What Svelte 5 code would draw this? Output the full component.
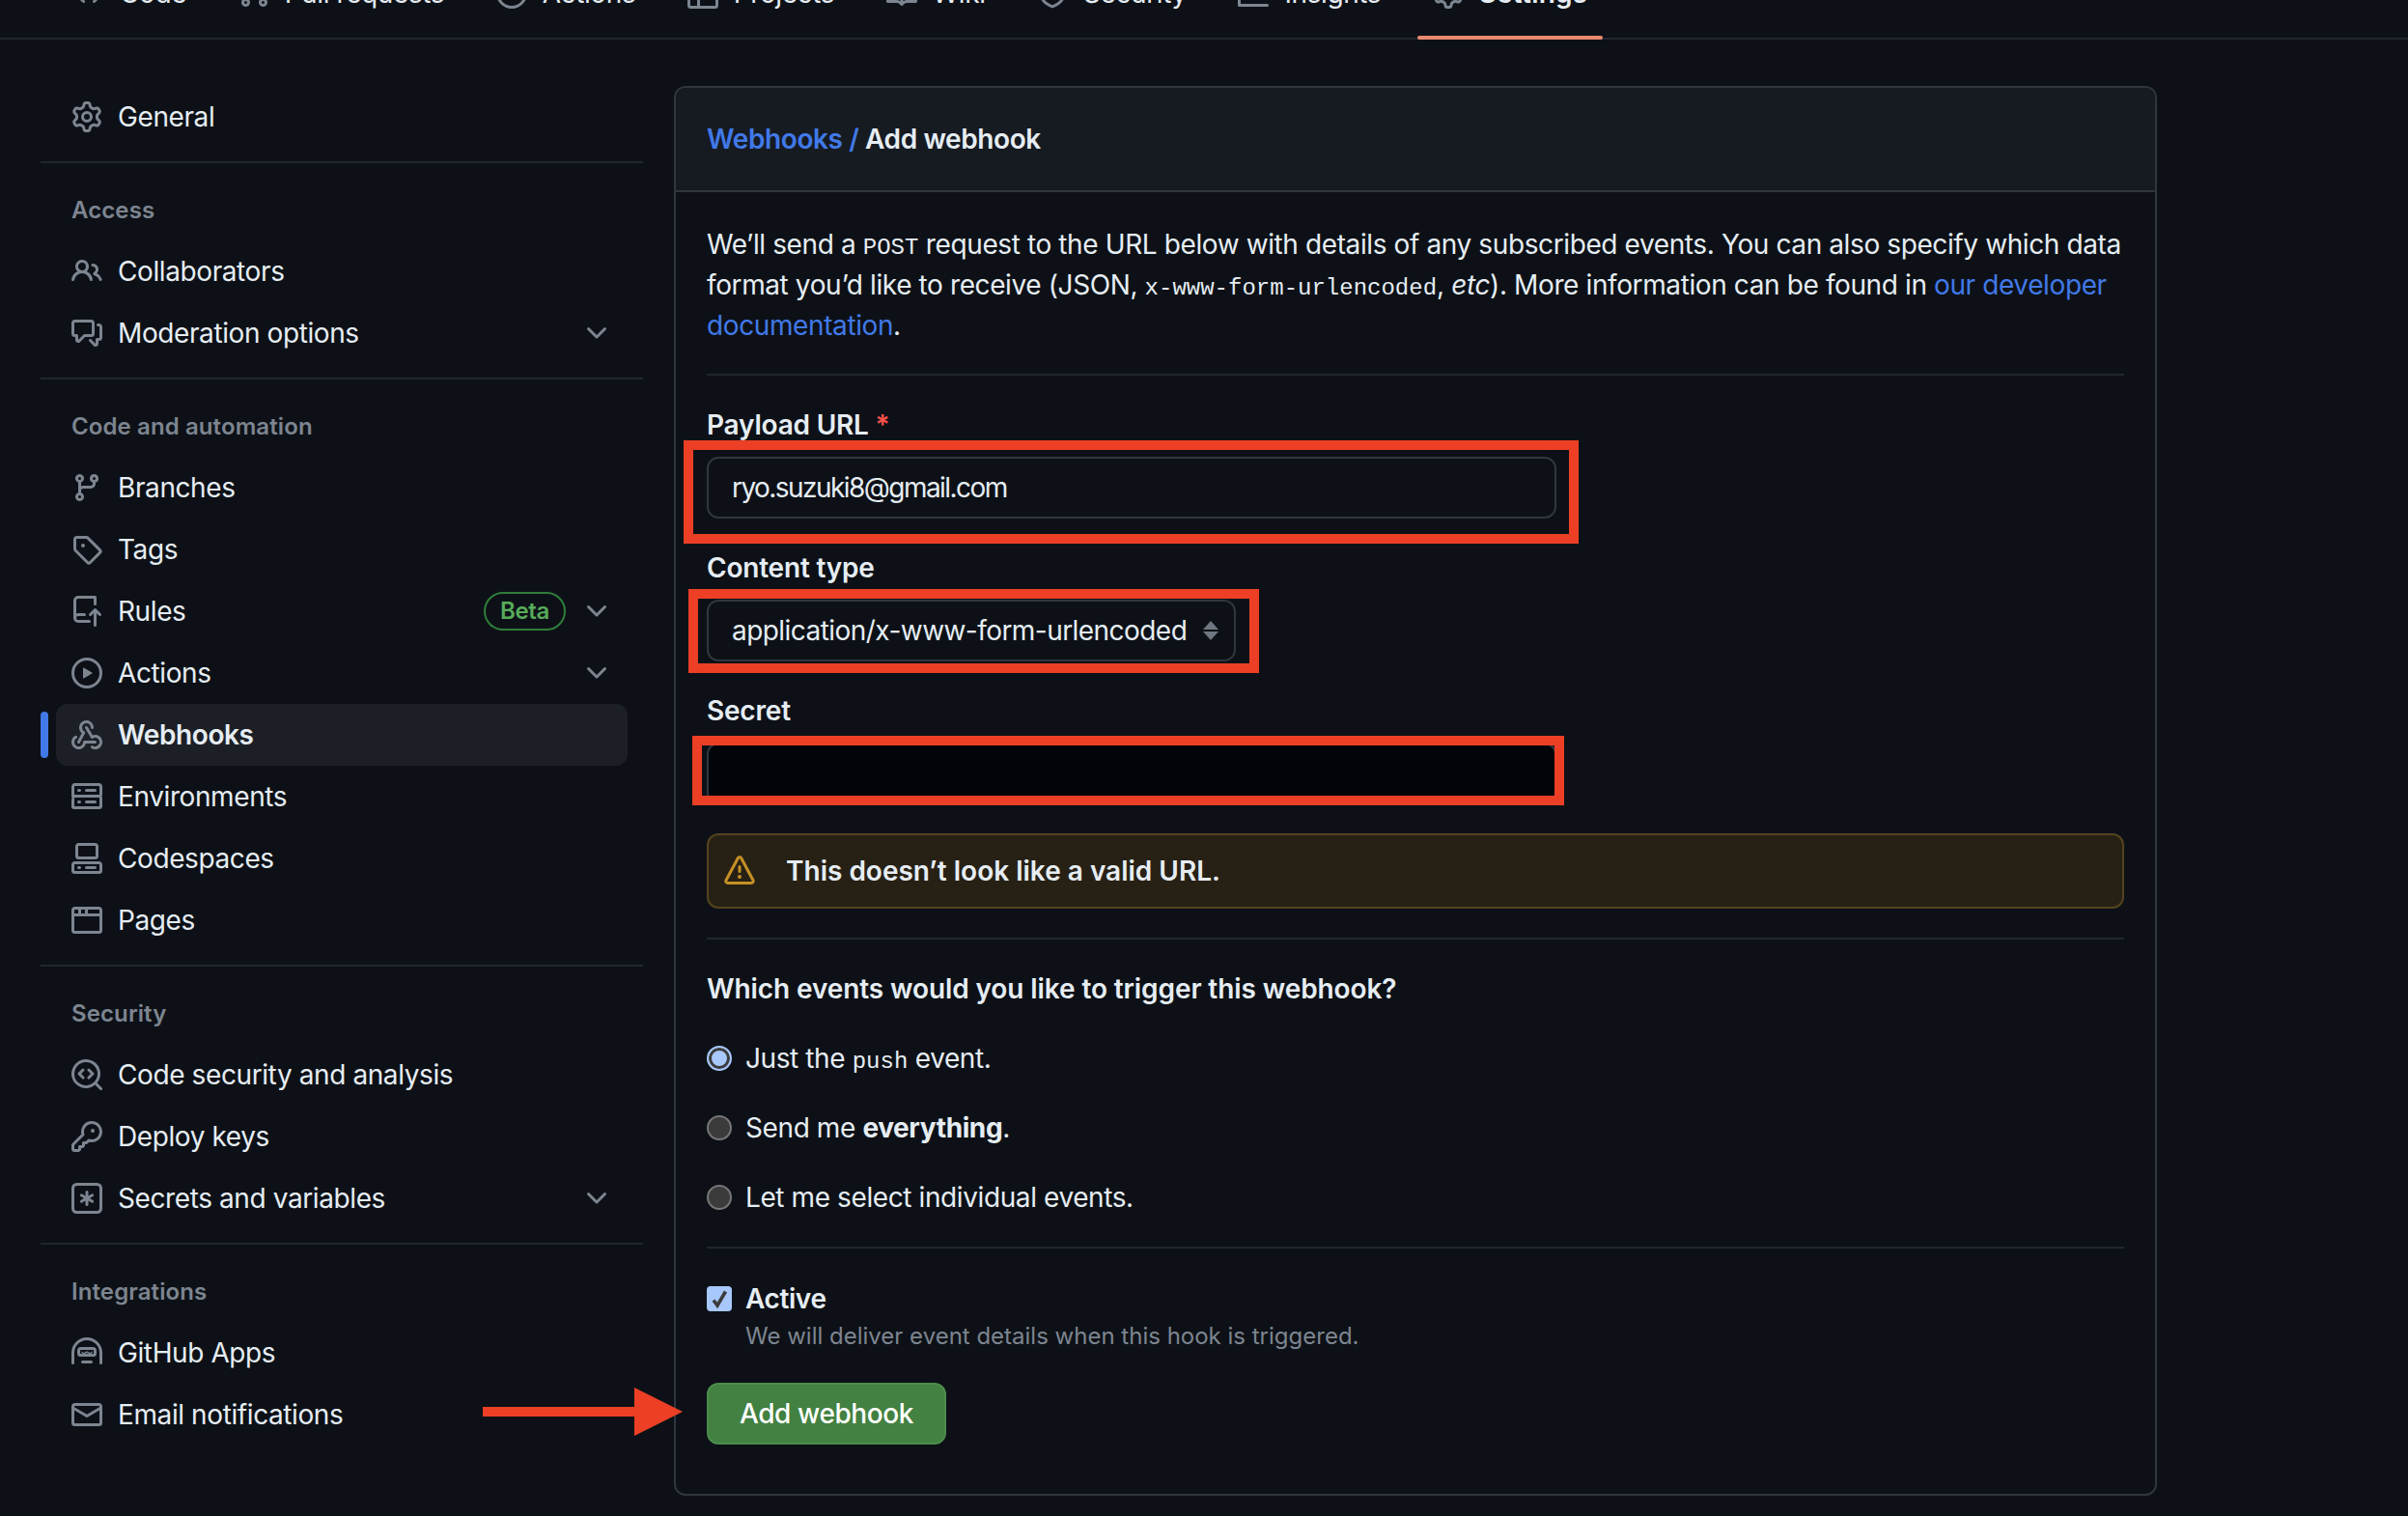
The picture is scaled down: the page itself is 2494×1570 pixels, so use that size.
<script>
	const icons = {
		code: 'm11.28 3.22 4.25 4.25a.75.75 0 0 1 0 1.06l-4.25 4.25a.749.749 0 0 1-1.275-.326.749.749 0 0 1 .215-.734L13.94 8l-3.72-3.72a.749.749 0 0 1 .326-1.275.749.749 0 0 1 .734.215Zm-6.56 0a.751.751 0 0 1 1.042.018.751.751 0 0 1 .018 1.042L2.06 8l3.72 3.72a.749.749 0 0 1-.326 1.275.749.749 0 0 1-.734-.215L.47 8.53a.75.75 0 0 1 0-1.06Z',
		pull: 'M1.5 3.25a2.25 2.25 0 1 1 3 2.122v5.256a2.251 2.251 0 1 1-1.5 0V5.372A2.25 2.25 0 0 1 1.5 3.25Zm5.677-.177L9.573.677A.25.25 0 0 1 10 .854V2.5h1A2.5 2.5 0 0 1 13.5 5v5.628a2.251 2.251 0 1 1-1.5 0V5a1 1 0 0 0-1-1h-1v1.646a.25.25 0 0 1-.427.177L7.177 3.427a.25.25 0 0 1 0-.354ZM3.75 2.5a.75.75 0 1 0 0 1.5.75.75 0 0 0 0-1.5Zm0 9.5a.75.75 0 1 0 0 1.5.75.75 0 0 0 0-1.5Zm8.25.75a.75.75 0 1 0 1.5 0 .75.75 0 0 0-1.5 0Z',
		play: 'M8 0a8 8 0 1 1 0 16A8 8 0 0 1 8 0ZM1.5 8a6.5 6.5 0 1 0 13 0 6.5 6.5 0 0 0-13 0Zm4.879-2.773 4.264 2.559a.25.25 0 0 1 0 .428l-4.264 2.559A.25.25 0 0 1 6 10.559V5.442a.25.25 0 0 1 .379-.215Z',
		table: 'M0 1.75C0 .784.784 0 1.75 0h12.5C15.216 0 16 .784 16 1.75v12.5A1.75 1.75 0 0 1 14.25 16H1.75A1.75 1.75 0 0 1 0 14.25ZM6.5 6.5v8h7.75a.25.25 0 0 0 .25-.25V6.5Zm8-1.5V1.75a.25.25 0 0 0-.25-.25H6.5V5Zm-13 1.5v7.75c0 .138.112.25.25.25H5v-8ZM5 5V1.5H1.75a.25.25 0 0 0-.25.25V5Z',
		book: 'M0 1.75A.75.75 0 0 1 .75 1h4.253c1.227 0 2.317.59 3 1.501A3.743 3.743 0 0 1 11.006 1h4.245a.75.75 0 0 1 .75.75v10.5a.75.75 0 0 1-.75.75h-4.507a2.25 2.25 0 0 0-1.591.659l-.622.621a.75.75 0 0 1-1.06 0l-.622-.621A2.25 2.25 0 0 0 5.258 13H.75a.75.75 0 0 1-.75-.75Zm7.251 10.324.004-5.073-.002-2.253A2.25 2.25 0 0 0 5.003 2.5H1.5v9h3.757a3.75 3.75 0 0 1 1.994.574ZM8.755 4.75l-.004 7.322a3.752 3.752 0 0 1 1.992-.572H14.5v-9h-3.495a2.25 2.25 0 0 0-2.25 2.25Z',
		shield: 'M7.467.133a1.748 1.748 0 0 1 1.066 0l5.25 1.68A1.75 1.75 0 0 1 15 3.48V7c0 1.566-.32 3.182-1.303 4.682-.983 1.498-2.585 2.813-5.032 3.855a1.697 1.697 0 0 1-1.33 0c-2.447-1.042-4.049-2.357-5.032-3.855C1.32 10.182 1 8.566 1 7V3.48a1.75 1.75 0 0 1 1.217-1.667Zm.61 1.429a.25.25 0 0 0-.153 0l-5.25 1.68a.25.25 0 0 0-.174.238V7c0 1.358.275 2.666 1.057 3.86.784 1.194 2.121 2.34 4.366 3.297a.196.196 0 0 0 .154 0c2.245-.956 3.582-2.104 4.366-3.298C13.225 9.666 13.5 8.36 13.5 7V3.48a.251.251 0 0 0-.174-.237l-5.25-1.68ZM8.75 4.75v3a.75.75 0 0 1-1.5 0v-3a.75.75 0 0 1 1.5 0ZM9 10.5a1 1 0 1 1-2 0 1 1 0 0 1 2 0Z',
		graph: 'M1.5 1.75V13.5h13.75a.75.75 0 0 1 0 1.5H.75a.75.75 0 0 1-.75-.75V1.75a.75.75 0 0 1 1.5 0Zm14.28 2.53-5.25 5.25a.75.75 0 0 1-1.06 0L7 7.06 4.28 9.78a.751.751 0 0 1-1.042-.018.751.751 0 0 1-.018-1.042l3.25-3.25a.75.75 0 0 1 1.06 0L8.5 7.44l4.72-4.72a.751.751 0 0 1 1.042.018.751.751 0 0 1 .018 1.042Z',
		gear: 'M8 0a8.2 8.2 0 0 1 .701.031C9.444.095 9.99.645 10.16 1.29l.288 1.107c.018.066.079.158.212.224.231.114.454.243.668.386.123.082.233.09.299.071l1.103-.303c.644-.176 1.392.021 1.82.63.27.385.506.792.704 1.218.315.675.111 1.422-.364 1.891l-.814.806c-.049.048-.098.147-.088.294.016.257.016.515 0 .772-.01.147.038.246.088.294l.814.806c.475.469.679 1.216.364 1.891a7.977 7.977 0 0 1-.704 1.217c-.428.61-1.176.807-1.82.63l-1.102-.302c-.067-.019-.177-.011-.3.071a5.909 5.909 0 0 1-.668.386c-.133.066-.194.158-.211.224l-.29 1.106c-.168.646-.715 1.196-1.458 1.26a8.006 8.006 0 0 1-1.402 0c-.743-.064-1.289-.614-1.458-1.26l-.289-1.106c-.018-.066-.079-.158-.212-.224a5.738 5.738 0 0 1-.668-.386c-.123-.082-.233-.09-.299-.071l-1.103.303c-.644.176-1.392-.021-1.82-.63a8.12 8.12 0 0 1-.704-1.218c-.315-.675-.111-1.422.363-1.891l.815-.806c.05-.048.098-.147.088-.294a6.214 6.214 0 0 1 0-.772c.01-.147-.038-.246-.088-.294l-.815-.806C.635 6.045.431 5.298.746 4.623a7.92 7.92 0 0 1 .704-1.217c.428-.61 1.176-.807 1.82-.63l1.102.302c.067.019.177.011.3-.071.214-.143.437-.272.668-.386.133-.066.194-.158.211-.224l.29-1.106C6.009.645 6.556.095 7.299.03 7.53.01 7.764 0 8 0Zm-.571 1.525c-.036.003-.108.036-.137.146l-.289 1.105c-.147.561-.549.967-.998 1.189-.173.086-.34.183-.5.29-.417.278-.97.423-1.529.27l-1.103-.303c-.109-.03-.175.016-.195.045-.22.312-.412.644-.573.99-.014.031-.021.11.059.19l.815.806c.411.406.562.957.53 1.456a4.709 4.709 0 0 0 0 .582c.032.499-.119 1.05-.53 1.456l-.815.806c-.081.08-.073.159-.059.19.162.346.353.677.573.989.02.03.085.076.195.046l1.102-.303c.56-.153 1.113-.008 1.53.27.161.107.328.204.501.29.447.222.85.629.997 1.189l.289 1.105c.029.109.101.143.137.146a6.6 6.6 0 0 0 1.142 0c.036-.003.108-.036.137-.146l.289-1.105c.147-.561.549-.967.998-1.189.173-.086.34-.183.5-.29.417-.278.97-.423 1.529-.27l1.103.303c.109.029.175-.016.195-.045.22-.313.411-.644.573-.99.014-.031.021-.11-.059-.19l-.815-.806c-.411-.406-.562-.957-.53-1.456a4.709 4.709 0 0 0 0-.582c-.032-.499.119-1.05.53-1.456l.815-.806c.081-.08.073-.159.059-.19a6.464 6.464 0 0 0-.573-.989c-.02-.03-.085-.076-.195-.046l-1.102.303c-.56.153-1.113.008-1.53-.27a4.44 4.44 0 0 0-.501-.29c-.447-.222-.85-.629-.997-1.189l-.289-1.105c-.029-.11-.101-.143-.137-.146a6.6 6.6 0 0 0-1.142 0ZM11 8a3 3 0 1 1-6 0 3 3 0 0 1 6 0ZM9.5 8a1.5 1.5 0 1 0-3.001.001A1.5 1.5 0 0 0 9.5 8Z',
		people: 'M2 5.5a3.5 3.5 0 1 1 5.898 2.549 5.508 5.508 0 0 1 3.034 4.084.75.75 0 1 1-1.482.235 4 4 0 0 0-7.9 0 .75.75 0 0 1-1.482-.236A5.507 5.507 0 0 1 3.102 8.05 3.493 3.493 0 0 1 2 5.5ZM11 4a3.001 3.001 0 0 1 2.22 5.018 5.01 5.01 0 0 1 2.56 3.012.749.749 0 0 1-.885.954.752.752 0 0 1-.549-.514 3.507 3.507 0 0 0-2.522-2.372.75.75 0 0 1-.574-.73v-.352a.75.75 0 0 1 .416-.672A1.5 1.5 0 0 0 11 5.5.75.75 0 0 1 11 4Zm-5.5-.5a2 2 0 1 0-.001 3.999A2 2 0 0 0 5.5 3.5Z',
		discussion: 'M1.75 1h8.5c.966 0 1.75.784 1.75 1.75v5.5A1.75 1.75 0 0 1 10.25 10H7.061l-2.574 2.573A1.458 1.458 0 0 1 2 11.543V10h-.25A1.75 1.75 0 0 1 0 8.25v-5.5C0 1.784.784 1 1.75 1ZM1.5 2.75v5.5c0 .138.112.25.25.25h1a.75.75 0 0 1 .75.75v2.19l2.72-2.72a.749.749 0 0 1 .53-.22h3.5a.25.25 0 0 0 .25-.25v-5.5a.25.25 0 0 0-.25-.25h-8.5a.25.25 0 0 0-.25.25Zm13 2a.25.25 0 0 0-.25-.25h-.5a.75.75 0 0 1 0-1.5h.5c.966 0 1.75.784 1.75 1.75v5.5A1.75 1.75 0 0 1 14.25 12H14v1.543a1.458 1.458 0 0 1-2.487 1.03L9.22 12.28a.749.749 0 0 1 .326-1.275.749.749 0 0 1 .734.215l2.22 2.22v-2.19a.75.75 0 0 1 .75-.75h1a.25.25 0 0 0 .25-.25Z',
		branch: 'M9.5 3.25a2.25 2.25 0 1 1 3 2.122V6A2.5 2.5 0 0 1 10 8.5H6a1 1 0 0 0-1 1v1.128a2.251 2.251 0 1 1-1.5 0V5.372a2.25 2.25 0 1 1 1.5 0v1.836A2.493 2.493 0 0 1 6 7h4a1 1 0 0 0 1-1v-.628A2.25 2.25 0 0 1 9.5 3.25Zm-6 0a.75.75 0 1 0 1.5 0 .75.75 0 0 0-1.5 0Zm8.25-.75a.75.75 0 1 0 0 1.5.75.75 0 0 0 0-1.5ZM4.25 12a.75.75 0 1 0 0 1.5.75.75 0 0 0 0-1.5Z',
		tag: 'M1 7.775V2.75C1 1.784 1.784 1 2.75 1h5.025c.464 0 .91.184 1.238.513l6.25 6.25a1.75 1.75 0 0 1 0 2.474l-5.026 5.026a1.75 1.75 0 0 1-2.474 0l-6.25-6.25A1.752 1.752 0 0 1 1 7.775Zm1.5 0c0 .066.026.13.073.177l6.25 6.25a.25.25 0 0 0 .354 0l5.025-5.025a.25.25 0 0 0 0-.354l-6.25-6.25a.25.25 0 0 0-.177-.073H2.75a.25.25 0 0 0-.25.25ZM6 5a1 1 0 1 1 0 2 1 1 0 0 1 0-2Z',
		repoPush: 'M1 2.5A2.5 2.5 0 0 1 3.5 0h8.75a.75.75 0 0 1 .75.75v3.5a.75.75 0 0 1-1.5 0V1.5h-8a1 1 0 0 0-1 1v6.708A2.493 2.493 0 0 1 3.5 9h3.25a.75.75 0 0 1 0 1.5H3.5a1 1 0 0 0 0 2h5.75a.75.75 0 0 1 0 1.5H3.5A2.5 2.5 0 0 1 1 11.5Zm13.23 7.79h-.001l-1.224-1.224v6.184a.75.75 0 0 1-1.5 0V9.066L10.28 10.29a.75.75 0 0 1-1.06-1.061l2.505-2.504a.75.75 0 0 1 1.06 0L15.29 9.23a.751.751 0 0 1-.018 1.042.751.751 0 0 1-1.042.018Z',
		webhook: 'M5.5 4.25a2.25 2.25 0 0 1 4.5 0 .75.75 0 0 0 1.5 0 3.75 3.75 0 1 0-6.14 2.889l-2.272 4.258a.75.75 0 0 0 1.324.706L7 7.25a.75.75 0 0 0-.309-1.015A2.25 2.25 0 0 1 5.5 4.25ZM7.364 3.607a.75.75 0 0 1 1.03.257l2.608 4.349a3.75 3.75 0 1 1-.628 6.785.75.75 0 0 1 .752-1.299 2.25 2.25 0 1 0-.033-3.88.75.75 0 0 1-1.03-.256L7.107 4.636a.75.75 0 0 1 .257-1.03ZM2.9 8.776A.75.75 0 0 1 2.625 9.8 2.25 2.25 0 1 0 6 11.75a.75.75 0 0 1 .75-.751h5.5a.75.75 0 0 1 0 1.5H7.425a3.751 3.751 0 1 1-5.55-3.998.75.75 0 0 1 1.024.274Z',
		server: 'M1.75 1h12.5c.966 0 1.75.784 1.75 1.75v4c0 .372-.116.717-.314 1 .198.283.314.628.314 1v4a1.75 1.75 0 0 1-1.75 1.75H1.75A1.75 1.75 0 0 1 0 13.75v-4c0-.372.116-.717.314-1A1.739 1.739 0 0 1 0 7.75v-4C0 1.784.784 1 1.75 1ZM1.5 2.75v4c0 .138.112.25.25.25h12.5a.25.25 0 0 0 .25-.25v-4a.25.25 0 0 0-.25-.25H1.75a.25.25 0 0 0-.25.25Zm.25 5.75a.25.25 0 0 0-.25.25v4c0 .138.112.25.25.25h12.5a.25.25 0 0 0 .25-.25v-4a.25.25 0 0 0-.25-.25ZM7 4.75A.75.75 0 0 1 7.75 4h4.5a.75.75 0 0 1 0 1.5h-4.5A.75.75 0 0 1 7 4.75ZM7.75 10h4.5a.75.75 0 0 1 0 1.5h-4.5a.75.75 0 0 1 0-1.5ZM3 4.75A.75.75 0 0 1 3.75 4h.5a.75.75 0 0 1 0 1.5h-.5A.75.75 0 0 1 3 4.75ZM3.75 10h.5a.75.75 0 0 1 0 1.5h-.5a.75.75 0 0 1 0-1.5Z',
		codespaces: 'M0 11.25c0-.966.784-1.75 1.75-1.75h12.5c.966 0 1.75.784 1.75 1.75v3A1.75 1.75 0 0 1 14.25 16H1.75A1.75 1.75 0 0 1 0 14.25Zm2-9.5C2 .784 2.784 0 3.75 0h8.5C13.216 0 14 .784 14 1.75v5a1.75 1.75 0 0 1-1.75 1.75h-8.5A1.75 1.75 0 0 1 2 6.75Zm1.75-.25a.25.25 0 0 0-.25.25v5c0 .138.112.25.25.25h8.5a.25.25 0 0 0 .25-.25v-5a.25.25 0 0 0-.25-.25Zm-2 9.5a.25.25 0 0 0-.25.25v3c0 .138.112.25.25.25h12.5a.25.25 0 0 0 .25-.25v-3a.25.25 0 0 0-.25-.25ZM7 12.75a.75.75 0 0 1 .75-.75h4.5a.75.75 0 0 1 0 1.5h-4.5a.75.75 0 0 1-.75-.75Zm-4 0a.75.75 0 0 1 .75-.75h.5a.75.75 0 0 1 0 1.5h-.5a.75.75 0 0 1-.75-.75Z',
		browser: 'M0 2.75C0 1.784.784 1 1.75 1h12.5c.966 0 1.75.784 1.75 1.75v10.5A1.75 1.75 0 0 1 14.25 15H1.75A1.75 1.75 0 0 1 0 13.25ZM14.5 6h-13v7.25c0 .138.112.25.25.25h12.5a.25.25 0 0 0 .25-.25Zm-6-3.5v2h6V2.75a.25.25 0 0 0-.25-.25ZM5 2.5v2h2v-2Zm-3.25 0a.25.25 0 0 0-.25.25V4.5h2v-2Z',
		codescan: 'M8.47 4.97a.75.75 0 0 0 0 1.06L9.94 7.5 8.47 8.97a.75.75 0 1 0 1.06 1.06l2-2a.75.75 0 0 0 0-1.06l-2-2a.75.75 0 0 0-1.06 0ZM6.53 6.03a.75.75 0 0 0-1.06-1.06l-2 2a.75.75 0 0 0 0 1.06l2 2a.75.75 0 1 0 1.06-1.06L5.06 7.5l1.47-1.47ZM12.246 13.307a7.501 7.501 0 1 1 1.06-1.06l2.474 2.473a.749.749 0 0 1-.326 1.275.749.749 0 0 1-.734-.215ZM1.5 7.5a6.002 6.002 0 0 0 3.608 5.504 6.002 6.002 0 0 0 6.486-1.117.748.748 0 0 1 .292-.293A6 6 0 1 0 1.5 7.5Z',
		key: 'M10.5 0a5.499 5.499 0 1 1-1.288 10.848l-.932.932a.749.749 0 0 1-.53.22H7v.75a.749.749 0 0 1-.22.53l-.5.5a.749.749 0 0 1-.53.22H5v.75a.749.749 0 0 1-.22.53l-.5.5a.749.749 0 0 1-.53.22h-2A1.75 1.75 0 0 1 0 14.25v-2c0-.199.079-.389.22-.53l4.932-4.932A5.5 5.5 0 0 1 10.5 0Zm-4 5.5c-.001.431.069.86.205 1.269a.75.75 0 0 1-.181.768L1.5 12.56v1.69c0 .138.112.25.25.25h1.69l.06-.06v-1.19a.75.75 0 0 1 .75-.75h1.19l.06-.06v-1.19a.75.75 0 0 1 .75-.75h1.19l1.023-1.025a.75.75 0 0 1 .768-.18A4 4 0 1 0 6.5 5.5ZM11 6a1 1 0 1 1 0-2 1 1 0 0 1 0 2Z',
		asterisk: 'M0 2.75A2.75 2.75 0 0 1 2.75 0h10.5A2.75 2.75 0 0 1 16 2.75v10.5A2.75 2.75 0 0 1 13.25 16H2.75A2.75 2.75 0 0 1 0 13.25ZM2.75 1.5c-.69 0-1.25.56-1.25 1.25v10.5c0 .69.56 1.25 1.25 1.25h10.5c.69 0 1.25-.56 1.25-1.25V2.75c0-.69-.56-1.25-1.25-1.25ZM8 4a.75.75 0 0 1 .75.75V6.7l1.69-.975a.75.75 0 0 1 .75 1.3L9.5 8l1.69.976a.75.75 0 0 1-.75 1.298L8.75 9.3v1.951a.75.75 0 0 1-1.5 0V9.299l-1.69.975a.75.75 0 0 1-.75-1.298L6.5 8l-1.69-.975a.75.75 0 0 1 .75-1.3l1.69.976V4.75A.75.75 0 0 1 8 4Z',
		hubot: 'M0 8a8 8 0 1 1 16 0v5.25a.75.75 0 0 1-1.5 0V8a6.5 6.5 0 1 0-13 0v5.25a.75.75 0 0 1-1.5 0ZM3 6.75C3 5.784 3.784 5 4.75 5h6.5c.966 0 1.75.784 1.75 1.75v1.5A1.75 1.75 0 0 1 11.25 10h-6.5A1.75 1.75 0 0 1 3 8.25Zm1.75-.25a.25.25 0 0 0-.25.25v1.5c0 .138.112.25.25.25h6.5a.25.25 0 0 0 .25-.25v-1.5a.25.25 0 0 0-.25-.25ZM5.75 12h4.5a.75.75 0 0 1 0 1.5h-4.5a.75.75 0 0 1 0-1.5ZM5.2 7.1l1.1.9 1.7-.9 1.7.9 1.1-.9v.9l-1.1.8-1.7-.8-1.7.8-1.1-.8Z',
		mail: 'M1.75 2h12.5c.966 0 1.75.784 1.75 1.75v8.5A1.75 1.75 0 0 1 14.25 14H1.75A1.75 1.75 0 0 1 0 12.25v-8.5C0 2.784.784 2 1.75 2ZM1.5 12.251c0 .138.112.25.25.25h12.5a.25.25 0 0 0 .25-.25V5.809L8.38 9.397a.75.75 0 0 1-.76 0L1.5 5.809v6.442Zm13-8.181v-.32a.25.25 0 0 0-.25-.25H1.75a.25.25 0 0 0-.25.25v.32L8 7.88Z',
		chevron: 'M12.78 5.22a.749.749 0 0 1 0 1.06l-4.25 4.25a.749.749 0 0 1-1.06 0L3.22 6.28a.749.749 0 1 1 1.06-1.06L8 8.939l3.72-3.719a.749.749 0 0 1 1.06 0Z',
		alert: 'M6.457 1.047c.659-1.234 2.427-1.234 3.086 0l6.082 11.378A1.75 1.75 0 0 1 14.082 15H1.918a1.75 1.75 0 0 1-1.543-2.575Zm1.763.707a.25.25 0 0 0-.44 0L1.698 13.132a.25.25 0 0 0 .22.368h12.164a.25.25 0 0 0 .22-.368Zm.53 3.996v2.5a.75.75 0 0 1-1.5 0v-2.5a.75.75 0 0 1 1.5 0ZM9 11a1 1 0 1 1-2 0 1 1 0 0 1 2 0Z'
	};

	const tabs = [
		{ label: 'Code', icon: 'code' },
		{ label: 'Pull requests', icon: 'pull' },
		{ label: 'Actions', icon: 'play' },
		{ label: 'Projects', icon: 'table' },
		{ label: 'Wiki', icon: 'book' },
		{ label: 'Security', icon: 'shield' },
		{ label: 'Insights', icon: 'graph' },
		{ label: 'Settings', icon: 'gear', active: true }
	];

	const groups = [
		{ items: [{ label: 'General', icon: 'gear' }] },
		{
			title: 'Access',
			items: [
				{ label: 'Collaborators', icon: 'people' },
				{ label: 'Moderation options', icon: 'discussion', more: true }
			]
		},
		{
			title: 'Code and automation',
			items: [
				{ label: 'Branches', icon: 'branch' },
				{ label: 'Tags', icon: 'tag' },
				{ label: 'Rules', icon: 'repoPush', beta: true, more: true },
				{ label: 'Actions', icon: 'play', more: true },
				{ label: 'Webhooks', icon: 'webhook', current: true },
				{ label: 'Environments', icon: 'server' },
				{ label: 'Codespaces', icon: 'codespaces' },
				{ label: 'Pages', icon: 'browser' }
			]
		},
		{
			title: 'Security',
			items: [
				{ label: 'Code security and analysis', icon: 'codescan' },
				{ label: 'Deploy keys', icon: 'key' },
				{ label: 'Secrets and variables', icon: 'asterisk', more: true }
			]
		},
		{
			title: 'Integrations',
			items: [
				{ label: 'GitHub Apps', icon: 'hubot' },
				{ label: 'Email notifications', icon: 'mail' }
			]
		}
	];
</script>

<div class="page">
	<nav class="repo-nav">
		{#each tabs as tab}
			<a class="tab" class:active={tab.active} href="#top">
				<svg class="icon" viewBox="0 0 16 16"><path d={icons[tab.icon]} /></svg>
				<span>{tab.label}</span>
			</a>
		{/each}
	</nav>

	<div class="layout">
		<aside class="sidebar">
			{#each groups as group, i}
				<div class="group" class:first={i === 0}>
					{#if group.title}
						<h3>{group.title}</h3>
					{/if}
					{#each group.items as item}
						<a class="row" class:current={item.current} href="#top">
							<svg class="icon" viewBox="0 0 16 16"><path d={icons[item.icon]} /></svg>
							<span class="row-label">{item.label}</span>
							{#if item.beta}
								<span class="beta">Beta</span>
							{/if}
							{#if item.more}
								<svg class="icon" viewBox="0 0 16 16"><path d={icons.chevron} /></svg>
							{/if}
						</a>
					{/each}
				</div>
			{/each}
		</aside>

		<main class="box">
			<div class="box-header">
				<a href="#top">Webhooks</a> <span class="slash">/</span> Add webhook
			</div>
			<form class="box-body">
				<p class="intro">
					We’ll send a <code>POST</code> request to the URL below with details of any subscribed events.
					You can also specify which data format you’d like to receive (JSON,
					<code>x-www-form-urlencoded</code>, <em>etc</em>). More information can be found in
					<a href="#top">our developer documentation</a>.
				</p>
				<hr />

				<label class="field-label" for="url">Payload URL <span class="req">*</span></label>
				<input id="url" class="control url" type="text" value="ryo.suzuki8@gmail.com" />

				<label class="field-label spaced" for="type">Content type</label>
				<div class="select-wrap">
					<select id="type" class="control">
						<option>application/x-www-form-urlencoded</option>
					</select>
					<svg class="updown" viewBox="0 0 16 20"><path d="M8 0 16 9H0ZM8 20 0 11H16Z" /></svg>
				</div>

				<label class="field-label spaced" for="secret">Secret</label>
				<input id="secret" class="control secret" type="text" />

				<div class="warning">
					<svg class="icon" viewBox="0 0 16 16"><path d={icons.alert} /></svg>
					<span>This doesn’t look like a valid URL.</span>
				</div>
				<hr />

				<h4>Which events would you like to trigger this webhook?</h4>
				<div class="events">
					<label class="event"><input type="radio" name="ev" checked /> <span>Just the <code>push</code> event.</span></label>
					<label class="event"><input type="radio" name="ev" /> <span>Send me <strong>everything</strong>.</span></label>
					<label class="event"><input type="radio" name="ev" /> <span>Let me select individual events.</span></label>
				</div>
				<hr />

				<div class="active-row">
					<span class="check">
						<svg viewBox="0 0 26 26"><path d="M7 14.5 11 20 19.5 5.5" /></svg>
					</span>
					<span class="active-label">Active</span>
				</div>
				<p class="note">We will deliver event details when this hook is triggered.</p>
				<button type="button" class="submit">Add webhook</button>
			</form>
		</main>
	</div>

	<!-- red annotations drawn on top of the screenshot -->
	<div class="mark mark-url"></div>
	<div class="mark mark-type"></div>
	<div class="mark mark-secret"></div>
	<svg class="arrow" viewBox="0 0 207 50"><path d="M0 20H157V0L207 25 157 50V30H0Z" /></svg>
</div>

<style>
	:global(body) {
		margin: 0;
		background: #0d1117;
	}
	.page {
		position: relative;
		width: 2494px;
		height: 1570px;
		overflow: hidden;
		background: #0d1117;
		color: #e6edf3;
		font-family: Inter, "Liberation Sans", sans-serif;
		font-size: 28px;
		line-height: 42px;
		letter-spacing: -0.4px;
	}
	a {
		color: inherit;
		text-decoration: none;
	}
	.icon {
		flex: none;
		width: 32px;
		height: 32px;
		fill: #7d8590;
	}

	.repo-nav {
		display: flex;
		align-items: flex-end;
		gap: 21.5px;
		height: 41px;
		padding-left: 60px;
		overflow: hidden;
		box-shadow: inset 0 -2px 0 #21262d;
	}
	.tab {
		position: relative;
		flex: none;
		display: flex;
		align-items: center;
		gap: 16px;
		height: 96px;
		padding: 0 16px;
		box-sizing: border-box;
	}
	.tab.active {
		font-weight: 600;
		letter-spacing: 0.2px;
	}
	.tab.active::after {
		content: "";
		position: absolute;
		left: 0;
		right: 0;
		bottom: 0;
		height: 4px;
		border-radius: 2px;
		background: #e9896f;
	}

	.layout {
		display: flex;
		align-items: flex-start;
		gap: 32px;
		padding: 48px 0 0 42px;
	}
	.sidebar {
		flex: none;
		width: 624px;
	}
	.group {
		margin-top: 14px;
		border-top: 2px solid #21262d;
	}
	.group.first {
		margin-top: 0;
		border-top: 0;
	}
	h3 {
		margin: 0;
		padding: 31px 32px 13px;
		font-size: 24px;
		line-height: 36px;
		font-weight: 600;
		color: #7d8590;
		letter-spacing: 0.1px;
	}
	.row {
		position: relative;
		display: flex;
		align-items: center;
		gap: 16px;
		height: 64px;
		margin-left: 16px;
		padding: 0 16px;
		box-sizing: border-box;
		width: 592px;
		border-radius: 12px;
	}
	.row-label {
		flex: 1;
	}
	.row.current {
		background: #1c2026;
		font-weight: 600;
	}
	.row.current::before {
		content: "";
		position: absolute;
		left: -16px;
		top: 8px;
		width: 8px;
		height: 48px;
		border-radius: 4px;
		background: #4179e8;
	}
	.beta {
		flex: none;
		width: 85px;
		height: 40px;
		box-sizing: border-box;
		border: 2px solid #2f7d3a;
		border-radius: 20px;
		color: #57ab5a;
		font-size: 24px;
		line-height: 36px;
		font-weight: 600;
		text-align: center;
	}

	.box {
		flex: none;
		width: 1536px;
		box-sizing: border-box;
		border: 2px solid #30363d;
		border-radius: 12px;
		overflow: hidden;
	}
	.box-header {
		height: 106px;
		box-sizing: content-box;
		padding: 0 32px;
		border-bottom: 2px solid #30363d;
		background: #161b22;
		font-weight: 600;
		line-height: 106px;
		white-space: pre-wrap;
	}
	.box-header a,
	.slash {
		color: #4179e8;
	}
	.box-body {
		display: flex;
		flex-direction: column;
		align-items: flex-start;
		padding: 33px 32px 51px;
	}
	.intro {
		margin: 0;
		width: 100%;
		letter-spacing: -0.39px;
	}
	.intro a {
		color: #4179e8;
	}
	code {
		font-family: "Liberation Mono", monospace;
		font-size: 24px;
		line-height: 0;
		letter-spacing: 0;
	}
	hr {
		width: 100%;
		height: 2px;
		margin: 29px 0 30px;
		border: 0;
		background: #21262d;
	}
	.field-label {
		font-weight: 600;
		margin-bottom: 12px;
		letter-spacing: -0.2px;
	}
	.field-label.spaced {
		margin-top: 30px;
	}
	.req {
		color: #f85149;
	}
	.control {
		display: block;
		height: 64px;
		box-sizing: border-box;
		padding: 0 24px;
		border: 2px solid #30363d;
		border-radius: 12px;
		background: #0d1117;
		color: #e6edf3;
		font-family: inherit;
		font-size: 28px;
		letter-spacing: -0.55px;
		outline: none;
	}
	.url,
	.secret {
		width: 880px;
	}
	.url {
		letter-spacing: -1.55px;
	}
	.secret {
		background: #010409;
	}
	.select-wrap {
		position: relative;
	}
	select.control {
		width: 548px;
		appearance: none;
	}
	.updown {
		position: absolute;
		right: 18px;
		top: 22px;
		width: 16px;
		height: 20px;
		fill: #6e7681;
	}
	.warning {
		display: flex;
		align-items: center;
		gap: 32px;
		width: 100%;
		height: 78px;
		box-sizing: border-box;
		margin: 30px 0 1px;
		padding: 0 16px;
		border: 2px solid #54431e;
		border-radius: 12px;
		background: #272115;
		font-weight: 600;
		letter-spacing: 0;
	}
	.warning .icon {
		fill: #c69026;
	}
	h4 {
		margin: 0;
		font-size: 28px;
		font-weight: 600;
		letter-spacing: -0.1px;
	}
	.events {
		display: flex;
		flex-direction: column;
		gap: 30px;
		margin: 30px 0 1px;
	}
	.event {
		display: flex;
		align-items: center;
		gap: 14px;
	}
	.event input {
		appearance: none;
		width: 26px;
		height: 26px;
		margin: 0;
		border: 2px solid #767676;
		border-radius: 50%;
		background: #3b3b3b;
	}
	.event input:checked {
		border-color: #a8c7fa;
		background: #a8c7fa;
		box-shadow: inset 0 0 0 3px #3b3b3b;
	}
	.active-row {
		display: flex;
		align-items: center;
		gap: 14px;
		margin-top: 1px;
	}
	.check {
		display: block;
		width: 26px;
		height: 26px;
		border-radius: 4px;
		background: #a8c7fa;
	}
	.check svg {
		display: block;
		fill: none;
		stroke: #3b3b3b;
		stroke-width: 3.5;
	}
	.active-label {
		font-weight: 600;
	}
	.note {
		margin: 0 0 30px 40px;
		font-size: 24px;
		line-height: 36px;
		color: #7d8590;
		letter-spacing: 0;
	}
	.submit {
		width: 248px;
		height: 64px;
		border: 2px solid #4c8c4c;
		border-radius: 12px;
		background: #428141;
		color: #fff;
		font-family: inherit;
		font-size: 28px;
		font-weight: 500;
		letter-spacing: -0.4px;
	}

	.mark {
		position: absolute;
		box-sizing: border-box;
		border: 10px solid #ec3f25;
	}
	.mark-url {
		left: 708px;
		top: 456px;
		width: 927px;
		height: 107px;
	}
	.mark-type {
		left: 713px;
		top: 610px;
		width: 591px;
		height: 87px;
	}
	.mark-secret {
		left: 717px;
		top: 762px;
		width: 903px;
		height: 72px;
	}
	.arrow {
		position: absolute;
		left: 500px;
		top: 1437px;
		width: 207px;
		height: 50px;
		fill: #ec3f25;
	}
</style>
